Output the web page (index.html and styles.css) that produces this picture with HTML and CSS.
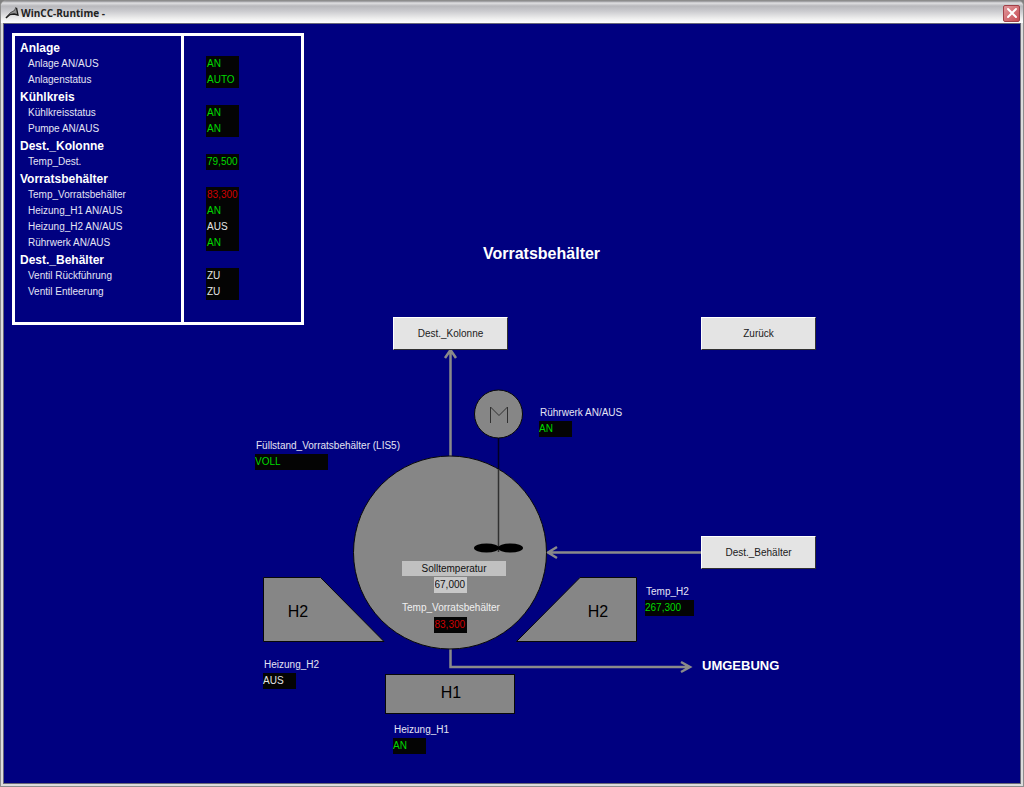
FILE: index.html
```html
<!DOCTYPE html>
<html lang="de">
<head>
<meta charset="utf-8">
<title>WinCC-Runtime</title>
<link rel="stylesheet" href="styles.css">
</head>
<body>
<div class="window">
  <header class="titlebar">
    <svg class="app-icon" width="14" height="14" viewBox="0 0 14 14" aria-hidden="true">
      <path d="M2 10 L6 6 L9.500 4 L11 1 L13 9 L9 8 L5 8.500 Z" fill="#909090"/>
      <path d="M1 11.500 L5 7 L9.500 4.500 L11 1" fill="none" stroke="#555"/>
      <path d="M1 12 L5 8.500 L9 8 L13 9 L11.500 2" fill="none" stroke="#1c1c1c" stroke-width="1.300"/>
    </svg>
    <span class="title">WinCC-Runtime -</span>
    <button class="close" type="button" aria-label="Schließen">
      <svg width="12" height="12" viewBox="0 0 12 12" aria-hidden="true"><path d="M2 2 L10 10 M10 2 L2 10" stroke="#fff" stroke-width="2" stroke-linecap="round"/></svg>
    </button>
  </header>

  <main class="stage">
    <table class="status">
      <tbody>
        <tr class="group"><th scope="rowgroup">Anlage</th><td></td></tr>
        <tr><th scope="row">Anlage AN/AUS</th><td><span class="value on">AN</span></td></tr>
        <tr><th scope="row">Anlagenstatus</th><td><span class="value on">AUTO</span></td></tr>
        <tr class="group"><th scope="rowgroup">Kühlkreis</th><td></td></tr>
        <tr><th scope="row">Kühlkreisstatus</th><td><span class="value on">AN</span></td></tr>
        <tr><th scope="row">Pumpe AN/AUS</th><td><span class="value on">AN</span></td></tr>
        <tr class="group"><th scope="rowgroup">Dest._Kolonne</th><td></td></tr>
        <tr><th scope="row">Temp_Dest.</th><td><span class="value on">79,500</span></td></tr>
        <tr class="group"><th scope="rowgroup">Vorratsbehälter</th><td></td></tr>
        <tr><th scope="row">Temp_Vorratsbehälter</th><td><span class="value alarm">83,300</span></td></tr>
        <tr><th scope="row">Heizung_H1 AN/AUS</th><td><span class="value on">AN</span></td></tr>
        <tr><th scope="row">Heizung_H2 AN/AUS</th><td><span class="value">AUS</span></td></tr>
        <tr><th scope="row">Rührwerk AN/AUS</th><td><span class="value on">AN</span></td></tr>
        <tr class="group"><th scope="rowgroup">Dest._Behälter</th><td></td></tr>
        <tr><th scope="row">Ventil Rückführung</th><td><span class="value">ZU</span></td></tr>
        <tr><th scope="row">Ventil Entleerung</th><td><span class="value">ZU</span></td></tr>
      </tbody>
    </table>

    <svg class="diagram" width="600" height="410" viewBox="250 310 600 410" aria-hidden="true">
      <g class="pipe">
        <path d="M450.500 457 V351 M445 358 L450.500 350 L456 358"/>
        <path d="M702 552.500 H549 M557 547 L548 552.500 L557 558"/>
        <path d="M450.500 648 V667 H690 M681 662 L690 667 L681 672"/>
      </g>
      <g class="shape">
        <circle cx="450" cy="552.500" r="96.500"/>
        <path d="M263.500 577.500 H320.500 L384 641.500 H263.500 Z"/>
        <path d="M580 577.500 H636.500 V641.500 H516.500 Z"/>
        <rect x="385.500" y="674.500" width="129" height="39"/>
        <circle cx="498.500" cy="414" r="24"/>
      </g>
      <path class="motor" d="M490.500 423 V407 L499 415.500 L507.500 407 V423"/>
      <path class="shaft-upper" d="M498.500 438 V469"/>
      <path class="shaft" d="M498.500 469 V552"/>
      <ellipse cx="486.500" cy="548" rx="12.500" ry="4.500"/>
      <ellipse cx="510.500" cy="548" rx="12.500" ry="4.500"/>
      <g class="heater">
        <text x="298" y="617">H2</text>
        <text x="598" y="617">H2</text>
        <text x="451" y="698">H1</text>
      </g>
    </svg>

    <h1 class="heading">Vorratsbehälter</h1>
    <button class="nav nav-column" type="button">Dest._Kolonne</button>
    <button class="nav nav-back" type="button">Zurück</button>
    <button class="nav nav-tank" type="button">Dest._Behälter</button>

    <div class="tag tag-stirrer"><span>Rührwerk AN/AUS</span><output class="value on">AN</output></div>
    <div class="tag tag-level"><span>Füllstand_Vorratsbehälter (LIS5)</span><output class="value wide on">VOLL</output></div>
    <div class="tag tag-temp2"><span>Temp_H2</span><output class="value medium on">267,300</output></div>
    <div class="tag tag-heat2"><span>Heizung_H2</span><output class="value">AUS</output></div>
    <div class="tag tag-heat1"><span>Heizung_H1</span><output class="value on">AN</output></div>

    <div class="readings">
      <label class="setpoint-label" for="setpoint">Solltemperatur</label>
      <input class="setpoint" id="setpoint" type="text" value="67,000">
      <span class="reading-label">Temp_Vorratsbehälter</span>
      <output class="value alarm">83,300</output>
    </div>
    <strong class="environment">UMGEBUNG</strong>
  </main>
</div>
</body>
</html>
```
FILE: styles.css
```css
* { box-sizing: border-box; }

body {
  margin: 0;
  background: #808080;
  color: #e4e4f4;
  font: 10px/16px "Liberation Sans", Arial, sans-serif;
}

button, input, output { font: inherit; }

.window {
  display: flex;
  flex-direction: column;
  min-height: 100vh;
  padding: 0 2px 2px;
  border: 1px solid #8c8c8c;
  border-radius: 6px 6px 0 0;
  background: #dcdcdc;
}

.titlebar {
  display: flex;
  align-items: center;
  height: 22px;
  margin: 0 -2px;
  padding: 2px 2px 0 4px;
  border-radius: 5px 5px 0 0;
  background: linear-gradient(#8e8e92 0, #e0e0e2 2px, #b8b8bc 5px, #cacace 10px, #ececec 17px, #fff 22px);
}

.title {
  margin-left: 2px;
  color: #222;
  font: bold 10px/16px "Open Sans", "Noto Sans", sans-serif;
}

.close {
  display: grid;
  place-items: center;
  width: 17px;
  height: 17px;
  margin-left: auto;
  margin-right: 1px;
  padding: 0;
  border: 1px solid #a04048;
  border-radius: 2px;
  background: linear-gradient(135deg, #e0989c, #c84c54);
}

.stage {
  position: relative;
  flex: 1;
  padding: 9px 8px;
  border: 1px solid #686878;
  background: #000080;
}

.status {
  display: block;
  width: 292px;
  padding: 3px 0 22px;
  border: 3px solid #fff;
  border-spacing: 0;
  background: linear-gradient(#fff, #fff) 166px 0 / 3px 100% no-repeat;
}

.status th {
  width: 191px;
  height: 16px;
  padding: 0 0 0 13px;
  font-weight: normal;
  text-align: left;
  white-space: nowrap;
}

.status td { padding: 0; }

.status .group th {
  height: 17px;
  padding-left: 5px;
  color: #fff;
  font-size: 12px;
  font-weight: bold;
}

.value {
  display: block;
  width: 33px;
  height: 16px;
  padding-left: 1px;
  background: #040404;
  color: #e4e4e4;
  line-height: 15px;
}

.value.on { color: #00d800; }
.value.alarm { color: #d00000; }
.value.medium { width: 49px; }
.value.wide { width: 73px; }

.diagram {
  position: absolute;
  top: 286px;
  left: 246px;
}

.pipe { fill: none; stroke: #8a8a8a; stroke-width: 2.5; }
.shape { fill: #868686; stroke: #080808; }
.motor { fill: none; stroke: #303030; }
.shaft { stroke: #303030; stroke-width: 1.5; }
.shaft-upper { stroke: #000020; stroke-width: 1.5; }
.heater { font-size: 16px; text-anchor: middle; }

.heading {
  position: absolute;
  top: 220px;
  left: 479px;
  margin: 0;
  color: #fff;
  font-size: 16px;
  line-height: 20px;
}

.nav {
  position: absolute;
  width: 115px;
  height: 33px;
  padding: 0;
  border: 1px solid #fff;
  border-right-color: #303030;
  border-bottom-color: #303030;
  background: #e4e4e4;
  color: #202020;
}

.nav-column { top: 293px; left: 389px; }
.nav-back { top: 293px; left: 697px; }
.nav-tank { top: 512px; left: 697px; }

.tag {
  position: absolute;
  display: flex;
  flex-direction: column;
  white-space: nowrap;
}

.tag > span { padding-left: 1px; }
.tag .value { padding-left: 0; line-height: 16px; }
.tag-stirrer { top: 381px; left: 535px; }
.tag-level { top: 414px; left: 251px; }
.tag-temp2 { top: 560px; left: 641px; }
.tag-heat2 { top: 633px; left: 259px; }
.tag-heat1 { top: 698px; left: 389px; }

.readings {
  position: absolute;
  top: 537px;
  left: 398px;
  display: flex;
  flex-direction: column;
  align-items: center;
  width: 104px;
}

.setpoint-label {
  align-self: stretch;
  background: #c0c0c0;
  color: #101010;
  line-height: 15px;
  text-align: center;
}

.setpoint {
  width: 33px;
  height: 16px;
  margin: 1px 8px 7px 0;
  padding: 0 0 0 1px;
  border: 0;
  background: #c8c8c8;
  color: #101010;
}

.reading-label { align-self: flex-start; color: #f0f0f0; }
.readings .value { margin: 1px 8px 0 0; line-height: 16px; }

.environment {
  position: absolute;
  top: 632px;
  left: 698px;
  color: #fff;
  font-size: 13px;
  line-height: 20px;
}
```
